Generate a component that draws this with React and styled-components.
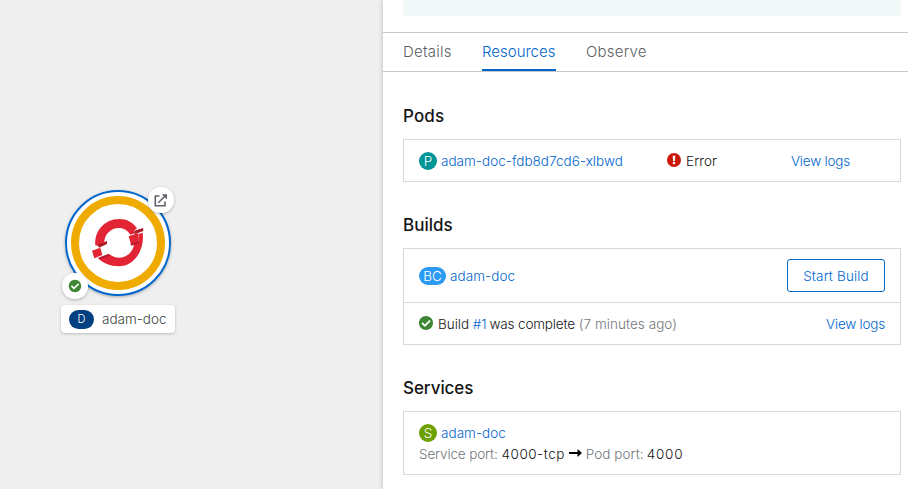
import React from "react";
import styled, { createGlobalStyle } from "styled-components";

const GlobalStyle = createGlobalStyle`
  * { box-sizing: border-box; }
  body { margin: 0; font-family: Inter, "Open Sans", sans-serif; font-size: 13.5px; font-weight: 350; color: #151515; background: #efefef; }
`;

const Page = styled.div`
  display: flex;
  width: 908px;
  height: 489px;
  overflow: hidden;
  background: #efefef;
`;

const Canvas = styled.main`
  position: relative;
  width: 383px;
  flex: none;
`;

const NodeArt = styled.svg`
  position: absolute;
  left: 55px;
  top: 180px;
  overflow: visible;
`;

const NodeLabel = styled.div`
  position: absolute;
  left: 61px;
  top: 305px;
  width: 114px;
  height: 28px;
  display: flex;
  align-items: center;
  gap: 8px;
  padding-left: 8px;
  border-radius: 4px;
  background: #fff;
  box-shadow: 0 1px 3px rgba(3, 3, 3, 0.22);
  color: #393f44;
`;

const Kind = styled.span`
  width: 25px;
  height: 19px;
  border-radius: 10px;
  background: #004080;
  color: #fff;
  font-size: 11px;
  line-height: 19px;
  text-align: center;
`;

const Panel = styled.aside`
  position: relative;
  flex: 1;
  display: flex;
  flex-direction: column;
  background: #fff;
  box-shadow: -1px 0 4px rgba(3, 3, 3, 0.16);
`;

const Hint = styled.div`
  height: 16px;
  margin: 0 7px 16px 20px;
  background: #f0f9f8;
`;

const Tabs = styled.nav`
  display: flex;
  gap: 30px;
  height: 40px;
  padding-left: 20px;
  border-top: 1px solid #c8c8c8;
  border-bottom: 1px solid #c8c8c8;
`;

const Tab = styled.a`
  width: ${(p) => p.$width}px;
  line-height: 37px;
  font-size: 15px;
  letter-spacing: ${(p) => p.$track || 0}px;
  white-space: nowrap;
  color: ${(p) => (p.$active ? "#06c" : "#5b5f64")};
  border-bottom: ${(p) => (p.$active ? "2px solid #06c" : "0")};
`;

const Content = styled.div`
  display: flex;
  flex-direction: column;
  gap: 32px;
  padding: 33px 7px 0 20px;
`;

const Heading = styled.h2`
  margin: 0 0 12px;
  font-size: 17px;
  font-weight: 500;
  line-height: 22px;
  letter-spacing: ${(p) => p.$track || 0}px;
`;

const Card = styled.div`
  border: 1px solid #d8d8d8;
`;

const Row = styled.div`
  display: flex;
  align-items: center;
  height: ${(p) => p.$height}px;
  padding: 0 15px;
  & + & { border-top: 1px solid #d8d8d8; }
`;

const PodRow = styled(Row)`
  display: grid;
  grid-template-columns: 248px 124px 1fr;
`;

const ServiceBody = styled.div`
  display: flex;
  flex-direction: column;
  height: 62px;
  padding: 10px 15px 0;
`;

const Line = styled.div`
  display: flex;
  align-items: center;
  height: 21px;
  white-space: nowrap;
`;

const Badge = styled.span`
  flex: none;
  width: ${(p) => p.$width || 18}px;
  height: 18px;
  margin-right: 4px;
  border-radius: 9px;
  background: ${(p) => p.$color};
  color: #fff;
  font-size: 13.5px;
  line-height: 18px;
  text-align: center;
`;

const Text = styled.span`
  color: ${(p) => (p.$muted ? "#72767b" : "inherit")};
  letter-spacing: ${(p) => p.$track || 0}px;
  margin-right: ${(p) => p.$after || 0}px;
  white-space: nowrap;
`;

const Link = styled.a`
  color: #06c;
  letter-spacing: ${(p) => p.$track || 0}px;
  margin-left: ${(p) => (p.$end ? "auto" : 0)};
  margin-right: ${(p) => p.$after || 0}px;
  white-space: nowrap;
`;

const Button = styled.button`
  width: 98px;
  height: 33px;
  margin-left: auto;
  padding: 0;
  border: 1px solid #06c;
  border-radius: 3px;
  background: #fff;
  color: #06c;
  font: inherit;
  letter-spacing: 0.15px;
`;

const StatusSvg = styled.svg`
  flex: none;
  margin: -2px 5px 0 0;
`;

const Arrow = styled.svg`
  flex: none;
  margin: -2px 4px 0 0;
`;

const CHECK =
  "M504 256c0 137-111 248-248 248S8 393 8 256 119 8 256 8s248 111 248 248zM227.300 387.300l184-184c6.200-6.200 6.200-16.400 0-22.600l-22.600-22.600c-6.200-6.200-16.400-6.200-22.600 0L216 308.100l-70.100-70.100c-6.200-6.200-16.400-6.200-22.600 0l-22.600 22.600c-6.200 6.200-6.200 16.400 0 22.600l104 104c6.200 6.300 16.400 6.300 22.600.1z";

const CheckIcon = () => (
  <StatusSvg width="14" height="14" viewBox="8 8 496 496" fill="#3e8635">
    <path d={CHECK} />
  </StatusSvg>
);

const ErrorIcon = () => (
  <StatusSvg width="14" height="14" viewBox="0 0 14 14">
    <circle cx="7" cy="7" r="7" fill="#c9190b" />
    <path d="M5.700 2.700h2.600L7.900 8H6.100z" fill="#fff" />
    <circle cx="7" cy="10.100" r="1.250" fill="#fff" />
  </StatusSvg>
);

function TopologyNode() {
  return (
    <NodeArt width="130" height="125" viewBox="55 180 130 125">
      <defs>
        <filter id="lift" x="-30%" y="-30%" width="160%" height="170%">
          <feDropShadow dx="0" dy="1" stdDeviation="1.500" floodColor="#030303" floodOpacity="0.3" />
        </filter>
      </defs>
      <circle cx="118" cy="243" r="52" fill="#fff" stroke="#06c" strokeWidth="2" filter="url(#lift)" />
      <circle cx="118" cy="243" r="43" fill="none" stroke="#f0ab00" strokeWidth="8" />
      <g transform="translate(85 210) scale(.33333)">
        <path d="M31 106C27 62 60 27 102 27c23 0 42 10 54 28l-9 7 2 8-13 4C128 61 116 54 102 54c-25 0-44 19-44 43l-20 10z" fill="#e22434" />
        <path d="M40 145l34-12c8 7 17 10 28 10 24 0 43-18 45-42l15-7-1-22 12-4c7 55-28 101-71 101-26 0-50-10-62-24z" fill="#e22434" />
        <path d="M21 122l25-9 6 22-24 10zM131 79l29-10 2 26-24 9z" fill="#e22434" />
        <path d="M38 104l28-11v9l-24 11zM38 144l34-13 1 6-29 10zM148 62l26-8 1 9-27 10zM136 102l27-8-1 4-23 9z" fill="#ad1b28" />
      </g>
      <circle cx="161" cy="200" r="13" fill="#fff" filter="url(#lift)" />
      <g fill="none" stroke="#5f6368" strokeWidth="1.600">
        <path d="M159.500 196h-4.200v9.700h9.700v-4.200" />
        <path d="M158.300 202.700l7-7" />
        <path d="M161.800 194.200h5.200v5.200z" fill="#5f6368" stroke="none" />
      </g>
      <circle cx="75" cy="286" r="13" fill="#fff" filter="url(#lift)" />
      <g transform="translate(68.800 279.800) scale(.025) translate(-8 -8)" fill="#3e8635">
        <path d={CHECK} />
      </g>
    </NodeArt>
  );
}

export default function App() {
  return (
    <Page>
      <GlobalStyle />
      <Canvas>
        <TopologyNode />
        <NodeLabel>
          <Kind>D</Kind>
          <Text>adam-doc</Text>
        </NodeLabel>
      </Canvas>
      <Panel>
        <Hint />
        <Tabs>
          <Tab $width={49} $track={0.25}>Details</Tab>
          <Tab $width={74} $active>Resources</Tab>
          <Tab $width={61} $track={0.2}>Observe</Tab>
        </Tabs>
        <Content>
          <section>
            <Heading $track={0.15}>Pods</Heading>
            <Card>
              <PodRow $height={41}>
                <Line>
                  <Badge $color="#009596">P</Badge>
                  <Link $track={0.03}>adam-doc-fdb8d7cd6-xlbwd</Link>
                </Line>
                <Line>
                  <ErrorIcon />
                  <Text $track={0.1}>Error</Text>
                </Line>
                <Link $track={-0.22}>View logs</Link>
              </PodRow>
            </Card>
          </section>
          <section>
            <Heading>Builds</Heading>
            <Card>
              <Row $height={53}>
                <Badge $color="#2b9af3" $width={27}>BC</Badge>
                <Link $track={0.08}>adam-doc</Link>
                <Button>Start Build</Button>
              </Row>
              <Row $height={42}>
                <CheckIcon />
                <Text $after={3.5}>Build</Text>
                <Link $after={3}>#1</Link>
                <Text $track={-0.17} $after={4}>was complete</Text>
                <Text $muted $track={0.04}>(7 minutes ago)</Text>
                <Link $track={-0.22} $end>View logs</Link>
              </Row>
            </Card>
          </section>
          <section>
            <Heading $track={-0.05}>Services</Heading>
            <Card>
              <ServiceBody>
                <Line>
                  <Badge $color="#6ca100">S</Badge>
                  <Link $track={0.05}>adam-doc</Link>
                </Line>
                <Line>
                  <Text $muted $track={-0.13} $after={4}>Service port:</Text>
                  <Text $track={0.5} $after={4}>4000-tcp</Text>
                  <Arrow width="13" height="10" viewBox="0 0 13 10">
                    <path d="M0 4h8.500V1L13 5 8.500 9V6H0z" fill="#030303" />
                  </Arrow>
                  <Text $muted $track={0.05} $after={3}>Pod port:</Text>
                  <Text $track={0.8}>4000</Text>
                </Line>
              </ServiceBody>
            </Card>
          </section>
        </Content>
      </Panel>
    </Page>
  );
}
